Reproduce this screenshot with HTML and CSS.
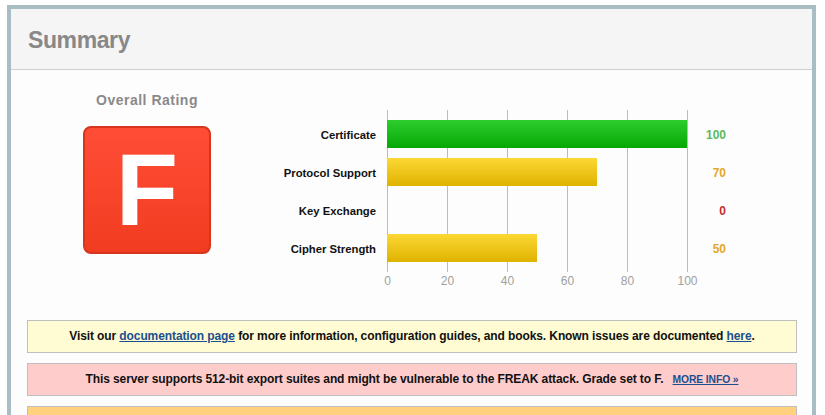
FILE: index.html
```html
<!DOCTYPE html>
<html>
<head>
<meta charset="utf-8">
<link rel="stylesheet" href="styles.css">
</head>
<body>
<div class="section">
  <div class="section-head">Summary</div>
  <div class="section-body">
    <div class="summary">
      <div class="rating">
        <div class="rating-title">Overall Rating</div>
        <div class="grade">F</div>
      </div>
      <div class="chart">
        <div class="labels">
          <div class="label">Certificate</div>
          <div class="label">Protocol Support</div>
          <div class="label">Key Exchange</div>
          <div class="label">Cipher Strength</div>
        </div>
        <div class="plot-wrap">
          <div class="plot">
            <div class="row"><div class="bar bar-green" style="width:300px"></div></div>
            <div class="row"><div class="bar bar-yellow" style="width:210px"></div></div>
            <div class="row"><div class="bar" style="width:0"></div></div>
            <div class="row"><div class="bar bar-yellow" style="width:150px"></div></div>
          </div>
          <div class="axis">
            <span>0</span><span>20</span><span>40</span><span>60</span><span>80</span><span>100</span>
          </div>
        </div>
        <div class="values">
          <div class="value v-green">100</div>
          <div class="value v-orange">70</div>
          <div class="value v-red">0</div>
          <div class="value v-orange">50</div>
        </div>
      </div>
    </div>
    <div class="notice notice-info">Visit our <a href="#">documentation page</a> for more information, configuration guides, and books. Known issues are documented <a href="#">here</a>.</div>
    <div class="notice notice-error">This server supports 512-bit export suites and might be vulnerable to the FREAK attack. Grade set to F. <a class="more" href="#">MORE INFO »</a></div>
    <div class="notice notice-warn">&nbsp;</div>
  </div>
</div>
</body>
</html>
```
FILE: styles.css
```css
html, body {
  margin: 0;
  padding: 0;
  background: #ffffff;
  font-family: "Liberation Sans", Arial, sans-serif;
  overflow: hidden;
}
body {
  padding: 5px 0 0 7px;
}
.section {
  width: 801px;
  border: 4px solid #a9bec3;
  border-bottom: none;
  background: #fdfdfd;
}
.section-head {
  height: 61px;
  box-sizing: border-box;
  padding: 17px 0 0 17px;
  background: #f5f5f5;
  border-bottom: 1px solid #cfcfcf;
  font-size: 23px;
  letter-spacing: -0.4px;
  font-weight: bold;
  color: #888888;
  line-height: 28px;
}
.section-body {
  padding: 0 15px 0 16px;
}
.summary {
  display: flex;
  height: 250px;
}
.rating {
  margin-left: 56px;
  width: 128px;
  display: flex;
  flex-direction: column;
  align-items: center;
}
.rating-title {
  margin-top: 22px;
  font-size: 14px;
  letter-spacing: 0.5px;
  font-weight: bold;
  color: #8a8a8a;
  line-height: 17px;
  white-space: nowrap;
}
.grade {
  margin-top: 17px;
  width: 128px;
  height: 128px;
  box-sizing: border-box;
  border: 2px solid #d8351d;
  border-radius: 8px;
  background: linear-gradient(#ff4d36, #f13c20);
  color: #ffffff;
  font-size: 102px;
  font-weight: bold;
  line-height: 124px;
  text-align: center;
}
.chart {
  display: flex;
  margin-left: 10px;
  padding-top: 40px;
}
.labels {
  width: 155px;
  padding-top: 11px;
  text-align: right;
}
.label {
  height: 38px;
  line-height: 28px;
  font-size: 11.3px;
  font-weight: bold;
  color: #111111;
  white-space: nowrap;
}
.plot-wrap {
  margin-left: 11px;
  width: 301px;
}
.plot {
  height: 162px;
  box-sizing: border-box;
  padding-top: 10px;
  background: repeating-linear-gradient(to right, #bcbcbc 0, #bcbcbc 1px, transparent 1px, transparent 60px);
}
.row {
  height: 38px;
}
.bar {
  height: 28px;
}
.bar-green {
  background: linear-gradient(#2ccd2c, #06a806);
}
.bar-yellow {
  background: linear-gradient(#fcd834, #dfb200);
}
.axis {
  display: flex;
  margin-left: -29.5px;
  padding-top: 1px;
  font-size: 12px;
  color: #a0a0a0;
  line-height: 16px;
}
.axis span {
  flex: 0 0 60px;
  text-align: center;
}
.values {
  width: 38px;
  padding-top: 11px;
  text-align: right;
}
.value {
  height: 38px;
  line-height: 28px;
  font-size: 12px;
  font-weight: bold;
}
.v-green { color: #5cb85c; }
.v-orange { color: #e3a82a; }
.v-red { color: #c42d2d; }
.notice {
  box-sizing: border-box;
  height: 33px;
  margin-bottom: 10px;
  border: 1px solid #bfbfbf;
  text-align: center;
  font-size: 12px;
  letter-spacing: -0.1px;
  font-weight: bold;
  line-height: 31px;
  color: #111111;
  white-space: nowrap;
}
.notice a {
  color: #1b4f8f;
}
.notice-info { background: #fffbd2; }
.notice-error { background: #ffcccc; }
.notice-warn { background: #ffd07e; }
.more {
  margin-left: 6px;
  font-size: 10.3px;
}
```
